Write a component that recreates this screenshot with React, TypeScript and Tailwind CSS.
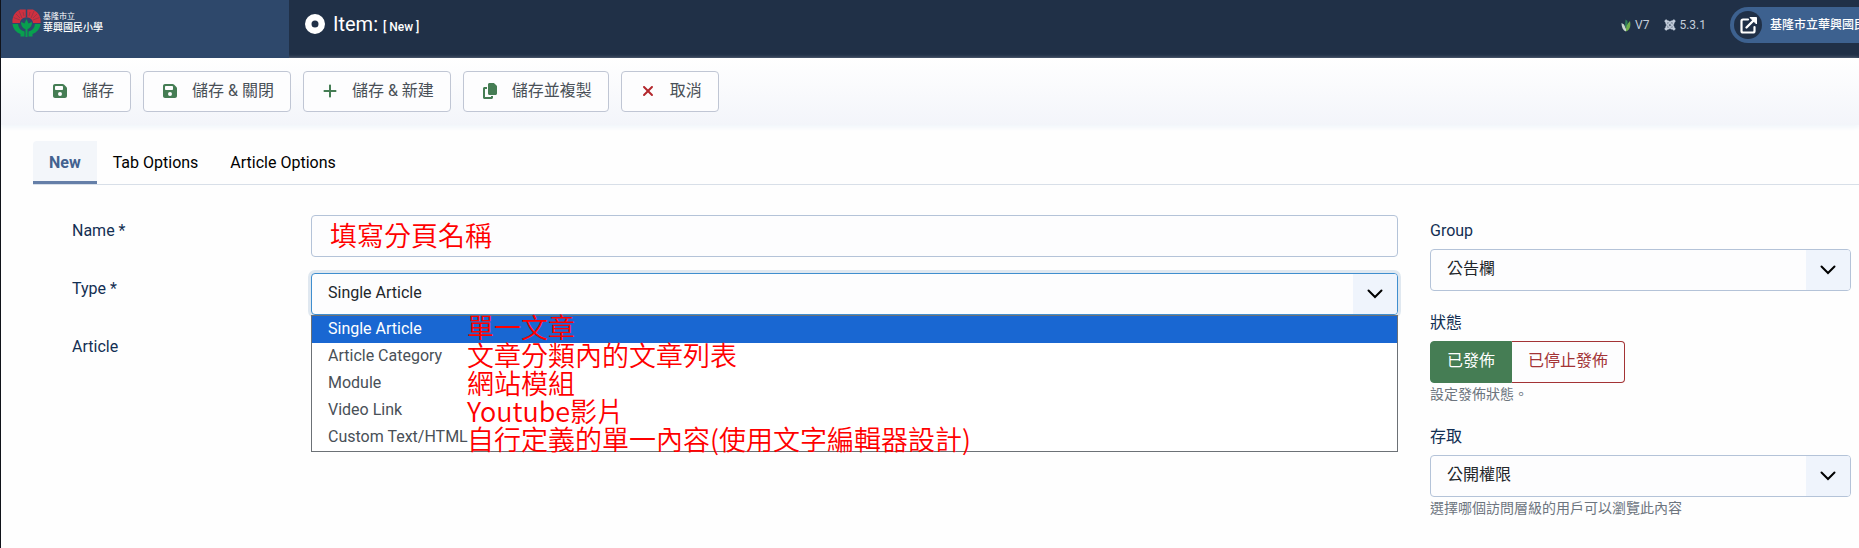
import React from "react";
import { FaFloppyDisk, FaPlus, FaCopy, FaXmark, FaJoomla } from "react-icons/fa6";

function SchoolLogo() {
  return (
    <svg viewBox="0 0 58 58" className="size-[29px] shrink-0" aria-hidden="true">
      <path d="M1 28C0 18 4 9 11 4L16 1H42L48 5C55 10 58 19 57 28H42C42 21 36 17 29 17S16 21 16 28Z" fill="#cf3040" />
      <path d="M29 0V17" stroke="#2d476b" strokeWidth="3" />
      <path d="M14 4L20 18M44 4L38 18M3 17L16 22M55 17L42 22M22 6L24 14M36 6L34 14M8 10L16 18M50 10L42 18" stroke="#8d3546" strokeWidth="1.5" />
      <path d="M1 30H12C13 38 17 43 25 45V55H17V50C8 47 2 39 1 30Z" fill="#08a04e" />
      <path d="M57 30H46C45 38 41 43 33 45V55H41V50C50 47 56 39 57 30Z" fill="#08a04e" />
      <path d="M29 20L33 29L40 26C40 34 36 39 31 40V56H27V40C22 39 18 34 18 26L25 29Z" fill="#08a04e" />
    </svg>
  );
}

function HelixMark() {
  return (
    <svg viewBox="0 0 20 26" className="h-[13px] w-[10px]" aria-hidden="true">
      <path d="M9 1L13 4V18L8 16Z" fill="#2f7d5a" />
      <path d="M1 8L6 11L10 20V25C4 23 1 17 1 8Z" fill="#c9d6cf" />
      <path d="M18 4C20 14 18 22 10 25C9 17 12 9 18 4Z" fill="#6fae4c" />
    </svg>
  );
}

function ExternalLink() {
  return (
    <svg viewBox="0 0 17 17" className="size-[17px]" aria-hidden="true">
      <path d="M8 2.5H3Q1.5 2.5 1.5 4V14Q1.5 15.5 3 15.5H13Q14.5 15.5 14.5 14V10" fill="none" stroke="#fff" strokeWidth="2.2" strokeLinecap="round" />
      <path d="M6.5 10.5L13.5 3.5" stroke="#fff" strokeWidth="2.4" strokeLinecap="round" />
      <path d="M10 .5H16.5V7Z" fill="#fff" stroke="#fff" strokeLinejoin="round" />
    </svg>
  );
}

const actions = [
  { label: "儲存", icon: <FaFloppyDisk className="size-4 text-[#457d54]" /> },
  { label: "儲存 & 關閉", icon: <FaFloppyDisk className="size-4 text-[#457d54]" /> },
  { label: "儲存 & 新建", icon: <FaPlus className="size-4 text-[#457d54]" /> },
  { label: "儲存並複製", icon: <FaCopy className="size-4 text-[#457d54]" /> },
  { label: "取消", icon: <FaXmark className="size-4 text-[#b3272d]" /> },
];

const types = ["Single Article", "Article Category", "Module", "Video Link", "Custom Text/HTML"];

const notes = [
  "單一文章",
  "文章分類內的文章列表",
  "網站模組",
  "Youtube影片",
  "自行定義的單一內容(使用文字編輯器設計)",
];

function SelectBox({ id, options, focused = false }: { id: string; options: string[]; focused?: boolean }) {
  return (
    <div className="relative">
      <select
        id={id}
        className={
          "block h-[42px] w-full appearance-none rounded-[4px] border bg-[#fdfdfe] pr-12 pb-[2px] pl-4 text-[#22262a] outline-none " +
          (focused ? "border-[#3f8ecf] ring-[3px] ring-[#e0e8f0]" : "border-[#b4c3d8]")
        }
      >
        {options.map((option) => (
          <option key={option}>{option}</option>
        ))}
      </select>
      <span className="pointer-events-none absolute inset-y-px right-px flex w-11 items-center justify-center rounded-r-[3px] bg-[#eff4fc]">
        <svg viewBox="0 0 16 10" className="h-[10px] w-4" fill="none" stroke="#000" strokeWidth="2" aria-hidden="true">
          <path d="M1.5 1.5L8 8L14.5 1.5" strokeLinecap="round" />
        </svg>
      </span>
    </div>
  );
}

export default function App() {
  return (
    <div className="min-h-screen overflow-hidden border-l border-[#10131a] bg-[#fefefe] font-['Roboto','Noto_Sans_CJK_TC',sans-serif] text-base leading-6 text-[#22262a]">
      <header className="flex h-[58px] bg-[#203047] text-white">
        <a href="#" className="flex w-72 shrink-0 items-start gap-[2px] bg-[#2e486b] pt-[9px] pl-[11px]">
          <SchoolLogo />
          <span className="flex flex-col pt-[3px]">
            <span className="text-[8px] leading-[10px]">基隆市立</span>
            <span className="text-[10px] leading-[11px] font-medium">華興國民小學</span>
          </span>
        </a>
        <div className="flex h-12 flex-1 items-center pl-4">
          <svg viewBox="0 0 20 20" className="size-5" aria-hidden="true">
            <path fillRule="evenodd" fill="#fff" d="M10 0a10 10 0 1 0 0 20a10 10 0 1 0 0-20M10 6.5a3.5 3.5 0 1 1 0 7a3.5 3.5 0 1 1 0-7" />
          </svg>
          <h1 className="flex items-baseline gap-[5px] pl-2 text-xl font-normal">
            Item: <span className="text-xs font-medium">[ New ]</span>
          </h1>
        </div>
        <div className="flex h-[50px] shrink-0 items-center text-xs text-[#c4cddb]">
          <span className="flex items-center gap-1">
            <HelixMark /> V7
          </span>
          <span className="flex items-center gap-[3px] pl-[15px]">
            <FaJoomla className="size-3 stroke-current" strokeWidth={20} /> 5.3.1
          </span>
          <a href="#" className="ml-6 flex h-9 w-[129px] items-center gap-2 overflow-hidden rounded-l-full bg-[#3d618f] pl-1 font-medium whitespace-nowrap text-white">
            <span className="flex size-7 shrink-0 items-center justify-center rounded-full bg-[#203047]">
              <ExternalLink />
            </span>
            基隆市立華興國民小學
          </a>
        </div>
      </header>

      <div className="flex gap-3 bg-linear-to-b from-white to-[#f3f5fa] px-8 py-[13px] shadow-[0_2px_5px_#eef4fa]">
        {actions.map((action) => (
          <button key={action.label} type="button" className="flex h-[41px] items-center gap-[14px] rounded-[4px] border border-[#c0c6d4] bg-[#fdfdfe] pr-4 pb-px pl-[18px] text-[#495057]">
            {action.icon}
            {action.label}
          </button>
        ))}
      </div>

      <nav role="tablist" className="mt-4 ml-8 flex border-b border-[#d8dfe8]">
        <button role="tab" aria-selected="true" className="h-[43px] rounded-tl-[4px] border-b-3 border-[#657fa8] bg-[#f3f6fa] px-4 pt-[3px] font-bold text-[#43628f]">
          New
        </button>
        <button role="tab" aria-selected="false" className="h-[43px] px-4 text-black">
          Tab Options
        </button>
        <button role="tab" aria-selected="false" className="h-[43px] px-4 text-black">
          Article Options
        </button>
      </nav>

      <main className="flex gap-8 pt-[30px] pr-2 pl-[71px]">
        <form className="grid flex-1 grid-cols-[239px_1fr] content-start gap-y-4 text-[#132f53]">
          <label htmlFor="name" className="pt-1">Name *</label>
          <input
            id="name"
            defaultValue="填寫分頁名稱"
            className="h-[42px] w-full rounded-[4px] border border-[#b4c3d8] bg-[#fdfdfe] px-[18px] pb-1 text-[27px] font-[350] text-[#ff0000] outline-none"
          />
          <label htmlFor="type" className="pt-1">Type *</label>
          <div className="relative">
            <SelectBox id="type" options={types} focused />
            <ul role="listbox" aria-label="Type" className="absolute inset-x-0 top-full border border-[#6c7176] bg-white text-[#495057]">
              {types.map((type, index) => (
                <li
                  key={type}
                  role="option"
                  aria-selected={index === 0}
                  className={"h-[27px] px-4 leading-[26px] " + (index === 0 ? "bg-[#1967d2] text-white" : "")}
                >
                  {type}
                </li>
              ))}
            </ul>
            <div className="pointer-events-none absolute top-10 left-[156px] font-['Noto_Sans_CJK_TC',sans-serif] text-[27px] leading-7 font-[350] whitespace-nowrap text-[#ff0000]">
              {notes.map((note) => (
                <p key={note}>{note}</p>
              ))}
            </div>
          </div>
          <span className="pt-1">Article</span>
        </form>

        <aside className="w-[421px] shrink-0 pt-1 text-[#132f53]">
          <label htmlFor="group" className="mb-[6px] block">Group</label>
          <SelectBox id="group" options={["公告欄"]} />

          <div className="pt-5">
            <p className="mb-[6px]">狀態</p>
            <div className="flex h-[42px]">
              <button type="button" className="rounded-l-[4px] border border-[#457d54] bg-[#457d54] px-4 pb-[2px] text-white">已發佈</button>
              <button type="button" className="rounded-r-[4px] border border-l-0 border-[#a33335] bg-[#fdfdfe] px-4 pb-[2px] text-[#a33335]">已停止發佈</button>
            </div>
            <p className="mt-px text-sm leading-5 text-[#6d757e]">設定發佈狀態。</p>
          </div>

          <div className="pt-[21px]">
            <label htmlFor="access" className="mb-[6px] block">存取</label>
            <SelectBox id="access" options={["公開權限"]} />
            <p className="mt-px text-sm leading-5 text-[#6d757e]">選擇哪個訪問層級的用戶可以瀏覽此內容</p>
          </div>
        </aside>
      </main>
    </div>
  );
}
